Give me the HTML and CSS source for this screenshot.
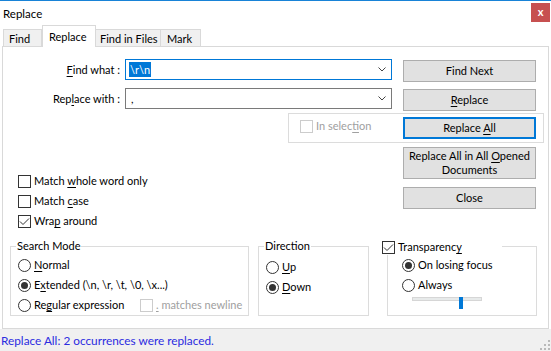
FILE: index.html
```html
<!DOCTYPE html>
<html lang="en">
<head>
    <meta charset="UTF-8">
    <title>Replace</title>
    <link rel="stylesheet" href="styles.css">
</head>
<body>
    <div class="titlebar">
        <span class="title">Replace</span>
        <span class="close">x</span>
    </div>
    <div class="tabs">
        <div class="tab tab-find">Find</div>
        <div class="tab tab-replace active">Replace</div>
        <div class="tab tab-files">Find in Files</div>
        <div class="tab tab-mark">Mark</div>
    </div>
    <div class="panel">
        <div class="row row-find">
            <label class="field-label"><u>F</u>ind what :</label>
            <div class="combo focus">
                <span class="sel">\r\n</span>
                <svg class="chevron" width="8" height="5" viewBox="0 0 8 5"><polyline points="0.5,0.5 4,4 7.5,0.5" fill="none" stroke="#444" stroke-width="1"/></svg>
            </div>
            <button class="btn">Find Next</button>
        </div>
        <div class="row row-repl">
            <label class="field-label">Rep<u>l</u>ace with :</label>
            <div class="combo">
                <span class="val">,</span>
                <svg class="chevron" width="8" height="5" viewBox="0 0 8 5"><polyline points="0.5,0.5 4,4 7.5,0.5" fill="none" stroke="#444" stroke-width="1"/></svg>
            </div>
            <button class="btn"><u>R</u>eplace</button>
        </div>
        <div class="selgroup">
            <label class="chk disabled"><span class="box"></span><span>In selec<u>t</u>ion</span></label>
            <button class="btn default">Replace <u>A</u>ll</button>
        </div>
        <div class="mid">
            <div class="options">
                <label class="chk"><span class="box"></span><span>Match <u>w</u>hole word only</span></label>
                <label class="chk"><span class="box"></span><span>Match <u>c</u>ase</span></label>
                <label class="chk"><span class="box checked"><svg width="11" height="11" viewBox="0 0 11 11"><polyline points="1,5.5 4,8.5 10,2.5" fill="none" stroke="#333" stroke-width="1"/></svg></span><span>Wra<u>p</u> around</span></label>
            </div>
            <div class="actions">
                <button class="btn tall">Replace All in All <u>O</u>pened<br>Documents</button>
                <button class="btn close-btn">Close</button>
            </div>
        </div>
        <div class="groups">
            <div class="group group-mode">
                <span class="group-title">Search Mode</span>
                <label class="radio"><span class="dot"></span><span><u>N</u>ormal</span></label>
                <label class="radio"><span class="dot on"></span><span>E<u>x</u>tended (\n, \r, \t, \0, \x...)</span></label>
                <div class="radio-row">
                    <label class="radio regex"><span class="dot"></span><span>Re<u>g</u>ular expression</span></label>
                    <label class="chk disabled"><span class="box"></span><span><u>.</u> matches newline</span></label>
                </div>
            </div>
            <div class="group group-dir">
                <span class="group-title">Direction</span>
                <label class="radio"><span class="dot"></span><span><u>U</u>p</span></label>
                <label class="radio"><span class="dot on"></span><span><u>D</u>own</span></label>
            </div>
            <div class="group group-trans">
                <span class="group-title trans-title">
                    <label class="chk"><span class="box checked"><svg width="11" height="11" viewBox="0 0 11 11"><polyline points="1,5.5 4,8.5 10,2.5" fill="none" stroke="#333" stroke-width="1"/></svg></span><span>Transparenc<u>y</u></span></label>
                </span>
                <label class="radio"><span class="dot on"></span><span>On losing focus</span></label>
                <label class="radio"><span class="dot"></span><span>Always</span></label>
                <div class="slider">
                    <div class="track"></div>
                    <div class="thumb" style="left: 47px"></div>
                </div>
            </div>
        </div>
    </div>
    <div class="status">
        <span class="status-text">Replace All: 2 occurrences were replaced.</span>
        <svg class="grip" width="10" height="10" viewBox="0 0 10 10">
            <rect x="8" y="0" width="2" height="2" fill="#b9b9b9"/>
            <rect x="4" y="4" width="2" height="2" fill="#b9b9b9"/>
            <rect x="8" y="4" width="2" height="2" fill="#b9b9b9"/>
            <rect x="0" y="8" width="2" height="2" fill="#b9b9b9"/>
            <rect x="4" y="8" width="2" height="2" fill="#b9b9b9"/>
            <rect x="8" y="8" width="2" height="2" fill="#b9b9b9"/>
        </svg>
    </div>
</body>
</html>
```

FILE: styles.css
```css
* {
    box-sizing: border-box;
}
body {
    margin: 0;
    width: 551px;
    height: 351px;
    overflow: hidden;
    background: #fff;
    border-top: 1px solid #1883d7;
    font-family: Lato, "Open Sans", sans-serif;
    font-size: 11px;
    color: #000;
}
u {
    text-decoration-thickness: 1px;
    text-underline-offset: 2px;
}
.titlebar {
    display: flex;
    align-items: flex-start;
    height: 24px;
}
.title {
    padding: 5px 0 0 3px;
    font-size: 11.5px;
    line-height: 16px;
}
.close {
    margin: 2px 1px 0 auto;
    width: 19px;
    height: 19px;
    background: #c75050;
    color: #fff;
    font-weight: bold;
    font-size: 11px;
    line-height: 17px;
    text-align: center;
}
.tabs {
    display: flex;
    align-items: flex-end;
    height: 21px;
    padding-left: 3px;
}
.tab {
    height: 17px;
    padding: 2px 0 0 5px;
    line-height: 14px;
    white-space: nowrap;
    background: #f0f0f0;
    border: 1px solid #d9d9d9;
    border-bottom: none;
}
.tab + .tab {
    border-left: none;
}
.tab.active {
    position: relative;
    z-index: 1;
    height: 22px;
    margin-bottom: -1px;
    padding: 4px 0 0 6px;
    background: #fff;
    border-left: 1px solid #d9d9d9;
}
.tab.active + .tab {
    border-left: none;
}
.tab-find { width: 39px; }
.tab-replace { width: 54px; }
.tab-files { width: 65px; padding-left: 4px; }
.tab-mark { width: 40px; padding-left: 6px; }
.panel {
    height: 283px;
    margin: 0 2px;
    border: 1px solid #d9d9d9;
    background: #fff;
}
.row {
    display: flex;
    align-items: flex-start;
    height: 23px;
}
.row-find {
    margin-top: 12px;
}
.row-repl {
    margin-top: 6px;
}
.field-label {
    width: 117px;
    margin-right: 5px;
    text-align: right;
    line-height: 21px;
}
.combo {
    display: flex;
    align-items: center;
    width: 267px;
    height: 21px;
    padding-left: 3px;
    border: 1px solid #7a7a7a;
}
.combo.focus {
    border-color: #0078d7;
}
.sel {
    background: #0078d7;
    color: #fff;
    line-height: 15px;
    padding: 0 1px;
}
.val {
    padding-left: 2px;
}
.chevron {
    margin-left: auto;
    margin-right: 5px;
}
.btn {
    width: 133px;
    height: 22px;
    margin: 1px 0 0 11px;
    padding: 0;
    background: #e1e1e1;
    border: 1px solid #adadad;
    font: inherit;
    color: #000;
    line-height: 14px;
    white-space: nowrap;
}
.btn.default {
    border: 2px solid #0078d7;
}
.selgroup {
    display: flex;
    align-items: flex-start;
    width: 256px;
    height: 30px;
    margin: 2px 0 0 285px;
    border: 1px solid #dcdcdc;
}
.selgroup .chk {
    margin: 4px 0 0 11px;
}
.selgroup .btn {
    margin: 3px 7px 0 auto;
}
.chk, .radio {
    display: flex;
    align-items: center;
    height: 16px;
    line-height: 16px;
    white-space: nowrap;
}
.box {
    display: flex;
    align-items: center;
    justify-content: center;
    flex: none;
    width: 13px;
    height: 13px;
    margin-right: 3px;
    border: 1px solid #333;
    background: #fff;
}
.chk.disabled {
    color: #a0a0a0;
}
.chk.disabled .box {
    border-color: #cccccc;
}
.dot {
    display: flex;
    align-items: center;
    justify-content: center;
    flex: none;
    width: 13px;
    height: 13px;
    margin-right: 3px;
    border: 1px solid #333;
    border-radius: 50%;
    background: #fff;
}
.dot.on::after {
    content: "";
    width: 7px;
    height: 7px;
    border-radius: 50%;
    background: #333;
}
.mid {
    display: flex;
    height: 95px;
    margin-top: 4px;
}
.options {
    width: 370px;
    margin-left: 15px;
    padding-top: 26px;
}
.options .chk {
    margin-bottom: 4px;
}
.actions {
    display: flex;
    flex-direction: column;
}
.actions .btn {
    margin: 0 0 0 15px;
}
.btn.tall {
    height: 32px;
}
.btn.close-btn {
    margin-top: 8px;
}
.groups {
    display: flex;
    margin: 4px 0 0 7px;
}
.group {
    position: relative;
    height: 70px;
    border: 1px solid #dcdcdc;
}
.group-title {
    position: absolute;
    top: -8px;
    left: 5px;
    padding: 0 1px;
    line-height: 14px;
    background: #fff;
}
.group .radio {
    margin-bottom: 4px;
}
.group-mode {
    width: 239px;
    padding: 10px 0 0 7px;
}
.radio-row {
    display: flex;
}
.radio.regex {
    width: 122px;
}
.group-dir {
    width: 111px;
    margin-left: 9px;
    padding: 12px 0 0 7px;
}
.group-trans {
    width: 150px;
    margin-left: 18px;
    padding: 10px 0 0 14px;
}
.trans-title {
    left: -6px;
    width: 120px;
    padding: 0;
    top: -8px;
}
.slider {
    position: relative;
    width: 70px;
    height: 12px;
    margin: -1px 0 0 10px;
}
.track {
    height: 4px;
    margin-top: 5px;
    background: #e7eaea;
    border: 1px solid #d6d6d6;
}
.thumb {
    position: absolute;
    top: 0;
    width: 4px;
    height: 12px;
    background: #0078d7;
}
.status {
    display: flex;
    align-items: flex-end;
    height: 22px;
    background: #f0f0f0;
}
.status-text {
    align-self: center;
    padding-left: 1px;
    font-size: 11.8px;
    color: #2b2be0;
}
.grip {
    margin: 0 1px 1px auto;
}
```
